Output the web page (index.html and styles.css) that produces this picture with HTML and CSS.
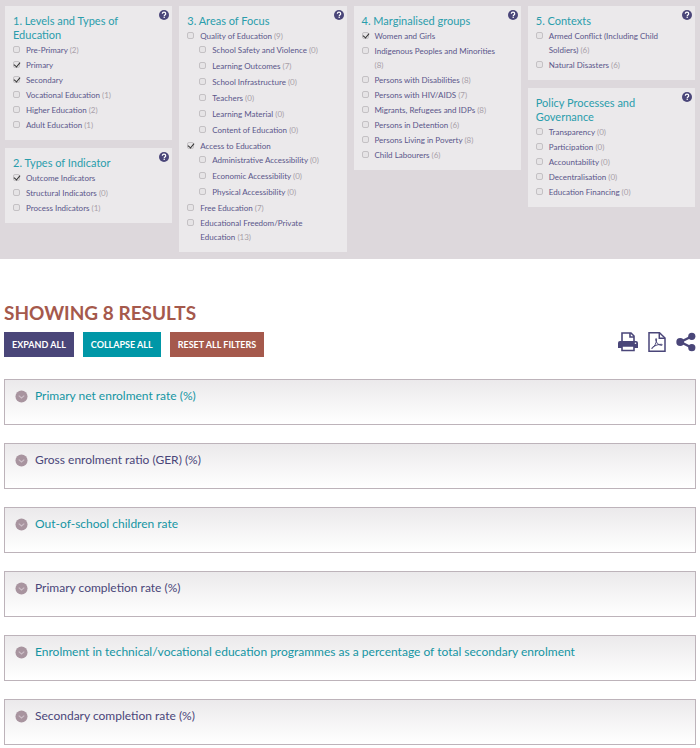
FILE: index.html
```html
<!DOCTYPE html>
<html lang="en">
<head>
    <meta charset="UTF-8">
    <meta name="viewport" content="width=device-width, initial-scale=1.0">
    <title>Indicators</title>
    <link rel="stylesheet" href="styles.css">
</head>
<body>
    <svg class="sprite" aria-hidden="true">
        <symbol id="icon-help" viewBox="0 0 20 20">
            <circle cx="10" cy="10" r="10" fill="#4a4679"/>
            <path d="M6.6 7.6C6.8 5.4 8.2 4.4 10 4.4c2 0 3.4 1.1 3.4 2.9 0 2.4-2.9 2.6-2.9 4.6" fill="none" stroke="#fff" stroke-width="2.5"/>
            <rect x="9.1" y="13.2" width="2.7" height="2.6" fill="#fff"/>
        </symbol>
        <symbol id="icon-chevron" viewBox="0 0 14 14">
            <circle cx="7" cy="7" r="6.5" fill="#a8949f"/>
            <path d="M4 6l3 2.6L10 6" fill="none" stroke="#cdbfc8" stroke-width="1.2"/>
        </symbol>
    </svg>

    <form class="filters">
        <div class="column">
            <section class="card">
                <button type="button" class="help" aria-label="Help"><svg><use href="#icon-help"/></svg></button>
                <h3>1. Levels and Types of Education</h3>
                <ul>
                    <li><label><input type="checkbox">Pre-Primary <span>(2)</span></label></li>
                    <li><label><input type="checkbox" checked>Primary</label></li>
                    <li><label><input type="checkbox" checked>Secondary</label></li>
                    <li><label><input type="checkbox">Vocational Education <span>(1)</span></label></li>
                    <li><label><input type="checkbox">Higher Education <span>(2)</span></label></li>
                    <li><label><input type="checkbox">Adult Education <span>(1)</span></label></li>
                </ul>
            </section>
            <section class="card">
                <button type="button" class="help" aria-label="Help"><svg><use href="#icon-help"/></svg></button>
                <h3>2. Types of Indicator</h3>
                <ul>
                    <li><label><input type="checkbox" checked>Outcome Indicators</label></li>
                    <li><label><input type="checkbox">Structural Indicators <span>(0)</span></label></li>
                    <li><label><input type="checkbox">Process Indicators <span>(1)</span></label></li>
                </ul>
            </section>
        </div>
        <div class="column">
            <section class="card">
                <button type="button" class="help" aria-label="Help"><svg><use href="#icon-help"/></svg></button>
                <h3>3. Areas of Focus</h3>
                <ul>
                    <li>
                        <label><input type="checkbox">Quality of Education <span>(9)</span></label>
                        <ul class="sub">
                            <li><label><input type="checkbox">School Safety and Violence <span>(0)</span></label></li>
                            <li><label><input type="checkbox">Learning Outcomes <span>(7)</span></label></li>
                            <li><label><input type="checkbox">School Infrastructure <span>(0)</span></label></li>
                            <li><label><input type="checkbox">Teachers <span>(0)</span></label></li>
                            <li><label><input type="checkbox">Learning Material <span>(0)</span></label></li>
                            <li><label><input type="checkbox">Content of Education <span>(0)</span></label></li>
                        </ul>
                    </li>
                    <li>
                        <label><input type="checkbox" checked>Access to Education</label>
                        <ul class="sub">
                            <li><label><input type="checkbox">Administrative Accessibility <span>(0)</span></label></li>
                            <li><label><input type="checkbox">Economic Accessibility <span>(0)</span></label></li>
                            <li><label><input type="checkbox">Physical Accessibility <span>(0)</span></label></li>
                        </ul>
                    </li>
                    <li><label><input type="checkbox">Free Education <span>(7)</span></label></li>
                    <li><label><input type="checkbox">Educational Freedom/Private Education <span>(13)</span></label></li>
                </ul>
            </section>
        </div>
        <div class="column">
            <section class="card">
                <button type="button" class="help" aria-label="Help"><svg><use href="#icon-help"/></svg></button>
                <h3>4. Marginalised groups</h3>
                <ul>
                    <li><label><input type="checkbox" checked>Women and Girls</label></li>
                    <li><label><input type="checkbox">Indigenous Peoples and Minorities <span>(8)</span></label></li>
                    <li><label><input type="checkbox">Persons with Disabilities <span>(8)</span></label></li>
                    <li><label><input type="checkbox">Persons with HIV/AIDS <span>(7)</span></label></li>
                    <li><label><input type="checkbox">Migrants, Refugees and IDPs <span>(8)</span></label></li>
                    <li><label><input type="checkbox">Persons in Detention <span>(6)</span></label></li>
                    <li><label><input type="checkbox">Persons Living in Poverty <span>(8)</span></label></li>
                    <li><label><input type="checkbox">Child Labourers <span>(6)</span></label></li>
                </ul>
            </section>
        </div>
        <div class="column">
            <section class="card">
                <button type="button" class="help" aria-label="Help"><svg><use href="#icon-help"/></svg></button>
                <h3>5. Contexts</h3>
                <ul>
                    <li><label><input type="checkbox">Armed Conflict (Including Child Soldiers) <span>(6)</span></label></li>
                    <li><label><input type="checkbox">Natural Disasters <span>(6)</span></label></li>
                </ul>
            </section>
            <section class="card">
                <button type="button" class="help" aria-label="Help"><svg><use href="#icon-help"/></svg></button>
                <h3>Policy Processes and Governance</h3>
                <ul>
                    <li><label><input type="checkbox">Transparency <span>(0)</span></label></li>
                    <li><label><input type="checkbox">Participation <span>(0)</span></label></li>
                    <li><label><input type="checkbox">Accountability <span>(0)</span></label></li>
                    <li><label><input type="checkbox">Decentralisation <span>(0)</span></label></li>
                    <li><label><input type="checkbox">Education Financing <span>(0)</span></label></li>
                </ul>
            </section>
        </div>
    </form>

    <main class="results">
        <h1>SHOWING 8 RESULTS</h1>
        <div class="toolbar">
            <button type="button" class="btn btn-expand">EXPAND ALL</button>
            <button type="button" class="btn btn-collapse">COLLAPSE ALL</button>
            <button type="button" class="btn btn-reset">RESET ALL FILTERS</button>
            <div class="actions">
                <button type="button" aria-label="Print">
                    <svg viewBox="0 0 20 20">
                        <path d="M4 9V1h9l3 3v5" fill="#fff" stroke="#4a4679" stroke-width="1.6"/>
                        <path d="M12 1v4h4" fill="none" stroke="#4a4679" stroke-width="1.6"/>
                        <path d="M2 9h16a2 2 0 0 1 2 2v5H0v-5a2 2 0 0 1 2-2z" fill="#4a4679"/>
                        <path d="M4 14h12v4.5H4z" fill="#fff" stroke="#4a4679" stroke-width="1.6"/>
                        <circle cx="17.5" cy="11.2" r=".8" fill="#fff"/>
                    </svg>
                </button>
                <button type="button" aria-label="Download PDF">
                    <svg viewBox="0 0 20 20" fill="none" stroke="#4a4679">
                        <path d="M2 .8h10.5L18 6v13.2H2z" stroke-width="1.5"/>
                        <path d="M12.3 1v5.2H18" stroke-width="1.5"/>
                        <path d="M5 16.5c2-1.2 5-6 4.6-9.4-.1-.9-1.2-.7-1 .5.6 3.2 3.2 5.9 6.2 5.7.8-.1.6-1-.4-1-2.8 0-6 .8-9.2 3.2-.7.6-.7 1.2-.2 1z" stroke-width="1"/>
                    </svg>
                </button>
                <button type="button" aria-label="Share">
                    <svg viewBox="0 0 20 20" fill="#4a4679">
                        <path d="M15.5 4.5L4.5 10l11 5.5" fill="none" stroke="#4a4679" stroke-width="2.4"/>
                        <circle cx="15.8" cy="4.3" r="3.6"/>
                        <circle cx="4.2" cy="10" r="3.9"/>
                        <circle cx="15.8" cy="15.7" r="3.6"/>
                    </svg>
                </button>
            </div>
        </div>

        <div class="list">
            <button type="button" class="result"><svg><use href="#icon-chevron"/></svg>Primary net enrolment rate (%)</button>
            <button type="button" class="result"><svg><use href="#icon-chevron"/></svg>Gross enrolment ratio (GER) (%)</button>
            <button type="button" class="result"><svg><use href="#icon-chevron"/></svg>Out-of-school children rate</button>
            <button type="button" class="result"><svg><use href="#icon-chevron"/></svg>Primary completion rate (%)</button>
            <button type="button" class="result"><svg><use href="#icon-chevron"/></svg>Enrolment in technical/vocational education programmes as a percentage of total secondary enrolment</button>
            <button type="button" class="result"><svg><use href="#icon-chevron"/></svg>Secondary completion rate (%)</button>
        </div>
    </main>
</body>
</html>
```
FILE: styles.css
```css
* {
    box-sizing: border-box;
}
body {
    margin: 0;
    font-family: Lato, "Open Sans", sans-serif;
    background-color: #fff;
    color: #4a4679;
}
button {
    font-family: inherit;
    border: none;
    padding: 0;
    background: none;
    cursor: pointer;
}
h1, h3, ul {
    margin: 0;
    padding: 0;
}
ul {
    list-style: none;
}
.sprite {
    display: none;
}

/* Filters */
.filters {
    display: grid;
    grid-template-columns: repeat(4, 1fr);
    gap: 7px;
    padding: 6px 5px 7px;
    background-color: #ddd8dc;
}
.column {
    display: flex;
    flex-direction: column;
    gap: 8px;
}
.card {
    position: relative;
    padding: 8px 8px 7px;
    background-color: #ebe9eb;
}
.card h3 {
    margin-bottom: 1px;
    padding-right: 20px;
    font-size: 11px;
    line-height: 14px;
    font-weight: normal;
    color: #2a9dab;
}
.help {
    position: absolute;
    top: 4px;
    right: 3px;
    width: 10px;
    height: 10px;
}
.help svg {
    display: block;
    width: 10px;
    height: 10px;
}
.card li {
    margin-bottom: 1px;
    font-size: 8px;
    line-height: 14px;
    color: #5a568a;
}
.card label {
    display: block;
    padding: 0 12px 0 13px;
}
.card label span {
    color: #a8a0a8;
}
.card input {
    appearance: none;
    float: left;
    width: 7px;
    height: 7px;
    margin: 3px 0 0 -13px;
    border: 1px solid #c4c1c4;
    border-radius: 2px;
    background-color: #e6e4e6;
}
.card input:checked::before {
    content: "";
    display: block;
    width: 3px;
    height: 5px;
    margin: -1px 0 0 1px;
    border: solid #333;
    border-width: 0 1px 1px 0;
    transform: rotate(40deg);
}
.card .sub {
    padding-left: 12px;
    margin-bottom: 2px;
}
.card .sub li {
    margin-bottom: 2px;
}
.card .sub label {
    padding-right: 0;
}

/* Results */
.results {
    padding: 42px 4px 4px;
}
.results h1 {
    font-size: 19px;
    line-height: 24px;
    color: #a5594c;
}
.toolbar {
    display: flex;
    align-items: flex-start;
    gap: 9px;
    margin-top: 7px;
}
.btn {
    height: 25px;
    padding: 0 8px;
    font-size: 9px;
    font-weight: bold;
    color: #fff;
}
.btn-expand {
    background-color: #4a4679;
}
.btn-collapse {
    background-color: #0097a7;
}
.btn-reset {
    background-color: #a5594c;
}
.actions {
    display: flex;
    gap: 9px;
    margin-left: auto;
}
.actions svg {
    display: block;
    width: 20px;
    height: 20px;
}
.list {
    display: flex;
    flex-direction: column;
    gap: 18px;
    margin-top: 22px;
}
.result {
    display: flex;
    align-items: flex-start;
    gap: 7px;
    min-height: 46px;
    padding: 8px 10px;
    border: 1px solid #bdb3ba;
    background: linear-gradient(#ebe9eb, #fff);
    font-size: 12px;
    line-height: 16px;
    text-align: left;
    color: #4a4679;
}
.result:nth-child(odd) {
    color: #1595a3;
}
.result svg {
    flex: none;
    width: 13px;
    height: 13px;
    margin-top: 2px;
}
```
